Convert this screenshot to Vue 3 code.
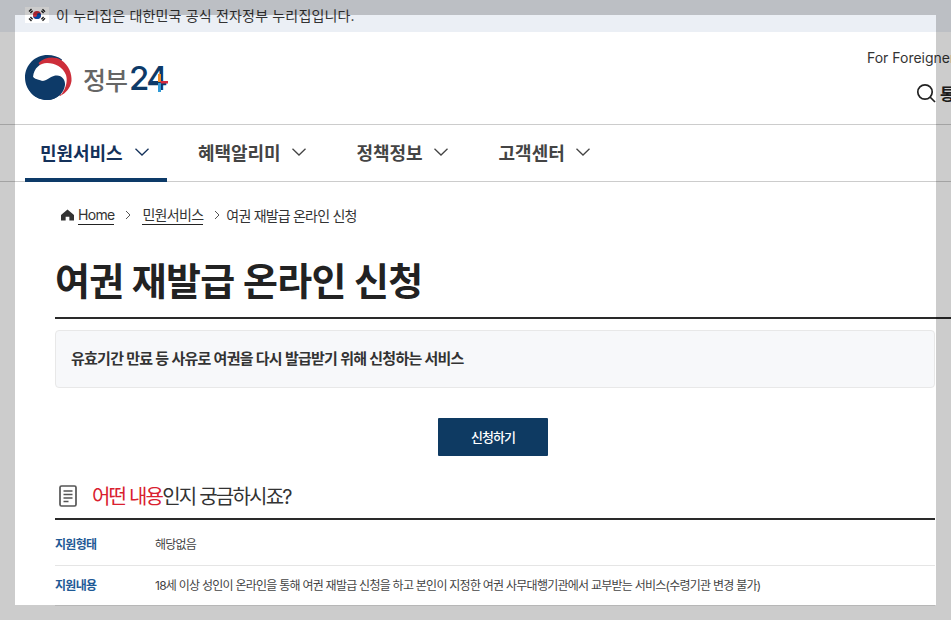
<script setup>
const navItems = [
  { label: '민원서비스', active: true },
  { label: '혜택알리미' },
  { label: '정책정보' },
  { label: '고객센터' }
]
const rows = [
  { term: '지원형태', desc: '해당없음' },
  { term: '지원내용', desc: '18세 이상 성인이 온라인을 통해 여권 재발급 신청을 하고 본인이 지정한 여권 사무대행기관에서 교부받는 서비스(수령기관 변경 불가)' }
]
</script>

<template>
  <div class="page">
    <div class="banner">
      <svg class="flag" viewBox="0 0 24 16" width="24" height="16">
        <rect width="24" height="16" fill="#fff" />
        <circle cx="12" cy="8" r="4" fill="#cd2e3a" />
        <path d="M8 8a4 4 0 0 0 8 0a2 2 0 0 0-4 0a2 2 0 0 1-4 0z" fill="#0047a0" />
        <g stroke="#222" stroke-width="1.4">
          <path d="M4 4.500l2.500-2.500M5.400 6l2.200-2.200" />
          <path d="M17.500 2.200l2.500 2.500M16.400 3.800l2.200 2.200" />
          <path d="M4 11.500l2.500 2.500M5.400 10l2.200 2.200" />
          <path d="M17.500 13.800l2.500-2.500M16.400 12.200l2.200-2.200" />
        </g>
      </svg>
      <span>이 누리집은 대한민국 공식 전자정부 누리집입니다.</span>
    </div>

    <header class="head">
      <div class="logo">
        <svg viewBox="0 0 48 46" width="48" height="46">
          <path d="M37 4.500C33 1.500 28 0 22.500 0C10 0 0 10 0 22.500S10 45 22.500 45C30 45 36 40 40 32L30 20z" fill="#0d3a68" />
          <path d="M13.500 8C20 2 29 1 36 5C44 10 47 19 46.500 26C45.500 33 41 38 35 41L25 25z" fill="#cd2e3a" />
          <path d="M8 22C9 13 15 8 22 8C30 8 38 12 41 20C42.500 25 42 32 36 40L30 30L8 23z" fill="#fff" />
          <path d="M7.800 21.500C11 26 17 27 21 25C25 23 27 20.500 32 20.500C37 20.500 40.500 25 40 30C39 38 32 45 22.500 45C10 45 1 36 1 22.500z" fill="#0d3a68" />
        </svg>
        <span class="logo-text">정부<b>24</b></span>
        <svg class="plus" viewBox="0 0 16 18" width="16" height="18">
          <rect x="0" y="7" width="6" height="2.500" fill="#0d3a68" />
          <rect x="6" y="0" width="3" height="8" fill="#f08a24" />
          <rect x="8.500" y="7" width="7.500" height="2.500" fill="#d6293e" />
          <rect x="6" y="9" width="3" height="9" fill="#2f9ad6" />
        </svg>
      </div>
      <div class="util">
        <a class="foreign">For Foreigner</a>
        <div class="search">
          <svg viewBox="0 0 20 20" width="20" height="20" fill="none" stroke="#222" stroke-width="1.700">
            <circle cx="9" cy="9" r="7.200" />
            <path d="M14 14l5 5" />
          </svg>
          <b>통합검색</b>
        </div>
      </div>
    </header>

    <nav class="nav">
      <a v-for="item in navItems" :key="item.label" class="nav-item" :class="{ active: item.active }">
        <span>{{ item.label }}</span>
        <svg viewBox="0 0 14 8" width="14" height="8" fill="none" stroke="currentColor" stroke-width="1.300">
          <path d="M.5.8L7 7l6.500-6.200" />
        </svg>
      </a>
    </nav>

    <main class="main">
      <div class="crumbs">
        <svg viewBox="0 0 14 12" width="13" height="12"><path d="M7 0l7 6v6H9V8H5v4H0V6z" fill="#333" /></svg>
        <a class="crumb-link">Home</a>
        <svg class="sep" viewBox="0 0 6 10" width="6" height="10" fill="none" stroke="#555"><path d="M1 1l4 4-4 4" /></svg>
        <a class="crumb-link">민원서비스</a>
        <svg class="sep sep-last" viewBox="0 0 6 10" width="6" height="10" fill="none" stroke="#555"><path d="M1 1l4 4-4 4" /></svg>
        <span class="crumb-current">여권 재발급 온라인 신청</span>
      </div>

      <h1 class="title">여권 재발급 온라인 신청</h1>

      <div class="summary">유효기간 만료 등 사유로 여권을 다시 발급받기 위해 신청하는 서비스</div>

      <div class="action"><button class="apply" type="button">신청하기</button></div>

      <h2 class="section">
        <svg viewBox="0 0 18 22" width="18" height="22" fill="none" stroke="#555">
          <rect x="1" y="1" width="16" height="20" rx="1.500" stroke-width="1.700" />
          <path d="M4.500 6h9M4.500 9.500h9M4.500 13h9M4.500 16.500h5" stroke-width="1.400" />
        </svg>
        <span><em>어떤 내용</em>인지 궁금하시죠?</span>
      </h2>

      <dl class="rows">
        <div v-for="row in rows" :key="row.term" class="row">
          <dt>{{ row.term }}</dt>
          <dd>{{ row.desc }}</dd>
        </div>
      </dl>
    </main>

    <div class="frame"></div>
  </div>
</template>

<style>
html, body { margin: 0; overflow: hidden; background: #fff; }
</style>

<style scoped>
.page {
  position: relative;
  width: 951px;
  height: 620px;
  overflow: hidden;
  background: #fff;
  color: #222;
  font-family: Inter, "Noto Sans CJK KR", sans-serif;
}
.frame {
  position: absolute;
  inset: 0;
  border: 15px solid rgba(0, 0, 0, 0.2);
  pointer-events: none;
}
.banner {
  box-sizing: border-box;
  height: 32px;
  background: #ebeff5;
  display: flex;
  align-items: center;
  padding: 0 0 2px 25px;
  gap: 7px;
  font-size: 14px;
  color: #333;
  letter-spacing: 0.17px;
}
.head {
  height: 92px;
  border-bottom: 1px solid #ccc;
  display: flex;
  justify-content: space-between;
  padding-left: 25px;
  width: 1040px;
  box-sizing: content-box;
}
.logo {
  display: flex;
  align-items: center;
}
.logo-text {
  margin-left: 10px;
  font-size: 25px;
  letter-spacing: -1px;
  color: #666;
  font-weight: 500;
  white-space: nowrap;
}
.logo-text b {
  color: #0d3a68;
  font-weight: 500;
  font-size: 33px;
  letter-spacing: -2.5px;
  margin-left: 2px;
}
.plus { margin-left: -14px; margin-top: 10px; }
.util {
  display: flex;
  flex-direction: column;
  align-items: flex-start;
  width: 198px;
}
.foreign {
  font-size: 14px;
  color: #333;
  margin-top: 17px;
  white-space: nowrap;
}
.search {
  display: flex;
  align-items: center;
  gap: 4px;
  margin: 15px 0 0 49px;
  white-space: nowrap;
  font-size: 16px;
}
.nav {
  height: 56px;
  border-bottom: 1px solid #ccc;
  display: flex;
  padding-left: 25px;
}
.nav-item {
  box-sizing: border-box;
  height: 57px;
  padding: 0 19px 4px 15px;
  margin-right: 17px;
  display: flex;
  align-items: center;
  gap: 11px;
  font-size: 18px;
  font-weight: 600;
  letter-spacing: -0.05px;
  color: #444;
  white-space: nowrap;
}
.nav-item.active {
  color: #14315a;
  border-bottom: 4px solid #0d3a68;
  padding: 0 15px;
  gap: 12px;
  width: 142px;
  margin-right: 16px;
}
.main { padding: 21px 0 0 55px; }
.crumbs {
  display: flex;
  align-items: center;
  height: 24px;
  padding-left: 6px;
  font-size: 14px;
  letter-spacing: -0.7px;
  color: #333;
}
.crumb-link {
  margin-left: 4px;
  border-bottom: 1px solid #222;
  line-height: 19px;
}
.sep + .crumb-link { margin-left: 0; }
.sep { margin: 0 11px 0 11px; }
.sep-last { margin-right: 6px; }
.crumb-current { letter-spacing: -0.8px; }
.title {
  margin: 28px 0 0;
  height: 62px;
  width: 1000px;
  border-bottom: 2px solid #2a2a2a;
  font-size: 38px;
  line-height: 52px;
  font-weight: 700;
  letter-spacing: -0.7px;
  color: #222;
  box-sizing: content-box;
}
.summary {
  box-sizing: border-box;
  width: 880px;
  height: 58px;
  margin-top: 11px;
  padding: 0 0 4px 15px;
  display: flex;
  align-items: center;
  background: #f7f8fa;
  border: 1px solid #e8e8e8;
  border-radius: 4px;
  font-size: 15px;
  font-weight: 600;
  letter-spacing: -0.75px;
  color: #333;
}
.action {
  width: 876px;
  display: flex;
  justify-content: center;
  margin-top: 30px;
}
.apply {
  width: 110px;
  height: 38px;
  border: 0;
  border-radius: 1px;
  padding: 0 0 2px;
  background: #0e3a62;
  color: #fff;
  font: 500 13px Inter, "Noto Sans CJK KR", sans-serif;
  letter-spacing: -1px;
}
.section {
  box-sizing: border-box;
  width: 880px;
  height: 64px;
  margin: 0;
  border-bottom: 2px solid #2a2a2a;
  display: flex;
  align-items: center;
  padding: 17px 0 0 4px;
  gap: 15px;
  font-size: 20px;
  font-weight: 400;
  letter-spacing: -1.8px;
  color: #333;
}
.section em { font-style: normal; color: #d9202f; }
.rows { width: 880px; margin: 0; }
.row {
  box-sizing: content-box;
  display: flex;
  align-items: center;
  height: 43px;
  padding-top: 2px;
  border-bottom: 1px solid #e5e5e5;
  font-size: 12px;
  letter-spacing: -0.75px;
}
.row + .row { height: 37px; padding: 0 0 2px; }
.row dt {
  width: 100px;
  font-weight: 700;
  color: #1f5a96;
  letter-spacing: -0.7px;
}
.row dd {
  margin: 0;
  color: #444;
}
</style>
